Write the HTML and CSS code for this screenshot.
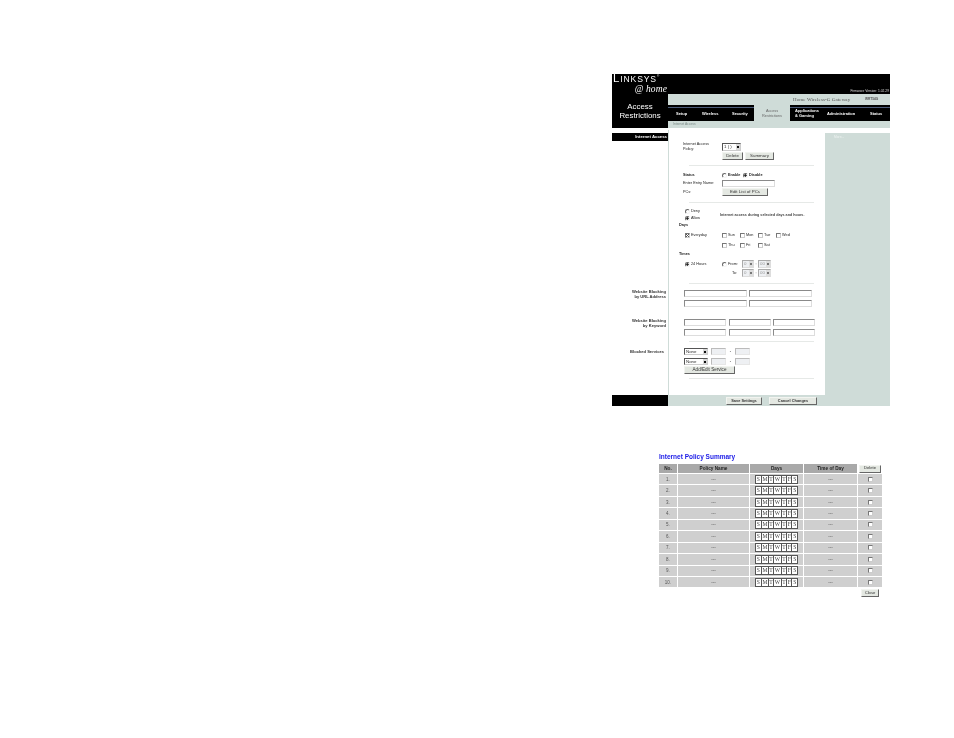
FILE: index.html
```html
<!DOCTYPE html>
<html lang="en">
<head>
<meta charset="utf-8">
<title>Access Restrictions</title>
<link rel="stylesheet" href="styles.css">
</head>
<body>
<div class="frame">
  <header class="top">
    <div class="brand">
      <div class="logo">L<small>INKSYS</small><sup>®</sup></div>
      <div class="logo-home">@ home</div>
      <h1 class="page-title">Access<br>Restrictions</h1>
    </div>
    <div class="head-right">
      <div class="firmware">Firmware Version: 1.02.29</div>
      <div class="product"><span class="product-name">Home Wireless-G Gateway</span><span class="product-model">WRT54G</span></div>
      <nav class="nav">
        <a class="tab t-setup">Setup</a>
        <a class="tab t-wireless">Wireless</a>
        <a class="tab t-security">Security</a>
        <a class="tab active">Access<br>Restrictions</a>
        <a class="tab t-apps">Applications<br>&amp; Gaming</a>
        <a class="tab t-admin">Administration</a>
        <a class="tab t-status">Status</a>
      </nav>
      <div class="subnav">Internet Access</div>
    </div>
  </header>
  <div class="main">
    <div class="content">
      <section class="section s-a">
        <div class="side"><div class="side-bar">Internet Access</div></div>
        <div class="form">
          <div class="row r-policy"><div class="lbl">Internet Access<br>Policy:</div>
            <div class="sel sel-policy"><select><option>1 ( )</option></select></div></div>
          <div class="row r-btns"><div class="lbl"></div><button class="btn b-delete">Delete</button><button class="btn b-summary">Summary</button></div>
          <hr class="rule r1">
          <div class="row r-status"><div class="lbl strong">Status</div>
            <input type="radio" class="radio" name="st"><span class="opt strong o-enable">Enable</span>
            <input type="radio" class="radio" name="st" checked><span class="opt strong">Disable</span></div>
          <div class="row r-entry"><div class="lbl">Enter Entry Name:</div><input class="txt t-entry" type="text"></div>
          <div class="row r-pcs"><div class="lbl">PCs:</div><button class="btn b-edit">Edit List of PCs</button></div>
          <hr class="rule r2">
          <div class="row r-access">
            <div class="deny-allow">
              <div class="mini"><input type="radio" class="radio" name="da"><span class="opt">Deny</span></div>
              <div class="mini"><input type="radio" class="radio" name="da" checked><span class="opt">Allow</span></div>
            </div>
            <span class="access-note">Internet access during selected days and hours.</span>
          </div>
          <div class="heading h-days">Days</div>
          <div class="row r-days">
            <div class="mini m-sched"><input type="checkbox" class="check" checked><span class="opt">Everyday</span></div>
            <div class="day"><input type="checkbox" class="check"><span class="opt">Sun</span></div>
            <div class="day"><input type="checkbox" class="check"><span class="opt">Mon</span></div>
            <div class="day"><input type="checkbox" class="check"><span class="opt">Tue</span></div>
            <div class="day"><input type="checkbox" class="check"><span class="opt">Wed</span></div>
          </div>
          <div class="row r-days2">
            <div class="m-sched"></div>
            <div class="day"><input type="checkbox" class="check"><span class="opt">Thu</span></div>
            <div class="day"><input type="checkbox" class="check"><span class="opt">Fri</span></div>
            <div class="day"><input type="checkbox" class="check"><span class="opt">Sat</span></div>
          </div>
          <div class="heading h-times">Times</div>
          <div class="row r-time">
            <div class="mini m-sched"><input type="radio" class="radio" name="tm" checked><span class="opt">24 Hours</span></div>
            <input type="radio" class="radio" name="tm"><span class="opt o-from">From:</span>
            <div class="sel sel-hr dim"><select disabled><option>0</option></select></div><span class="colon">:</span>
            <div class="sel sel-min dim"><select disabled><option>00</option></select></div>
          </div>
          <div class="row r-time2">
            <div class="m-sched"></div><span class="o-to">To:</span>
            <div class="sel sel-hr dim"><select disabled><option>0</option></select></div><span class="colon">:</span>
            <div class="sel sel-min dim"><select disabled><option>00</option></select></div>
          </div>
          <hr class="rule r3">
        </div>
      </section>
      <section class="section s-b">
        <div class="side"><div class="side-label l-b">Website Blocking<br>by URL Address</div></div>
        <div class="form">
          <div class="inputs two"><input class="txt" type="text"><input class="txt" type="text"><input class="txt" type="text"><input class="txt" type="text"></div>
          <hr class="rule r4">
        </div>
      </section>
      <section class="section s-c">
        <div class="side"><div class="side-label l-c">Website Blocking<br>by Keyword</div></div>
        <div class="form">
          <div class="inputs three"><input class="txt" type="text"><input class="txt" type="text"><input class="txt" type="text"><input class="txt" type="text"><input class="txt" type="text"><input class="txt" type="text"></div>
          <hr class="rule r5">
        </div>
      </section>
      <section class="section s-d">
        <div class="side"><div class="side-label l-d">Blocked Services</div></div>
        <div class="form">
          <div class="svc"><div class="sel sel-svc"><select><option>None</option></select></div><input class="port" type="text" disabled><span class="dash">-</span><input class="port" type="text" disabled></div>
          <div class="svc svc2"><div class="sel sel-svc"><select><option>None</option></select></div><input class="port" type="text" disabled><span class="dash">-</span><input class="port" type="text" disabled></div>
          <button class="btn b-add">Add/Edit Service</button>
          <hr class="rule r6">
        </div>
      </section>
    </div>
    <aside class="help">More...</aside>
  </div>
  <footer class="bottom">
    <div class="bottom-side"></div>
    <div class="bottom-bar"><button class="btn b-save">Save Settings</button><button class="btn b-cancel">Cancel Changes</button></div>
  </footer>
</div>

<div class="summary">
  <h2 class="sum-title">Internet Policy Summary</h2>
  <div class="sum-row sum-head"><div>No.</div><div>Policy Name</div><div>Days</div><div>Time of Day</div><div class="del-cell"><button class="btn b-del">Delete</button></div></div>
  <div class="sum-row"><div class="num">1.</div><div>---</div><div class="days"><span class="d">S</span><span class="d">M</span><span class="d dn">T</span><span class="d dw">W</span><span class="d dn">T</span><span class="d dn">F</span><span class="d">S</span></div><div>---</div><div><input class="check" type="checkbox"></div></div>
  <div class="sum-row"><div class="num">2.</div><div>---</div><div class="days"><span class="d">S</span><span class="d">M</span><span class="d dn">T</span><span class="d dw">W</span><span class="d dn">T</span><span class="d dn">F</span><span class="d">S</span></div><div>---</div><div><input class="check" type="checkbox"></div></div>
  <div class="sum-row"><div class="num">3.</div><div>---</div><div class="days"><span class="d">S</span><span class="d">M</span><span class="d dn">T</span><span class="d dw">W</span><span class="d dn">T</span><span class="d dn">F</span><span class="d">S</span></div><div>---</div><div><input class="check" type="checkbox"></div></div>
  <div class="sum-row"><div class="num">4.</div><div>---</div><div class="days"><span class="d">S</span><span class="d">M</span><span class="d dn">T</span><span class="d dw">W</span><span class="d dn">T</span><span class="d dn">F</span><span class="d">S</span></div><div>---</div><div><input class="check" type="checkbox"></div></div>
  <div class="sum-row"><div class="num">5.</div><div>---</div><div class="days"><span class="d">S</span><span class="d">M</span><span class="d dn">T</span><span class="d dw">W</span><span class="d dn">T</span><span class="d dn">F</span><span class="d">S</span></div><div>---</div><div><input class="check" type="checkbox"></div></div>
  <div class="sum-row"><div class="num">6.</div><div>---</div><div class="days"><span class="d">S</span><span class="d">M</span><span class="d dn">T</span><span class="d dw">W</span><span class="d dn">T</span><span class="d dn">F</span><span class="d">S</span></div><div>---</div><div><input class="check" type="checkbox"></div></div>
  <div class="sum-row"><div class="num">7.</div><div>---</div><div class="days"><span class="d">S</span><span class="d">M</span><span class="d dn">T</span><span class="d dw">W</span><span class="d dn">T</span><span class="d dn">F</span><span class="d">S</span></div><div>---</div><div><input class="check" type="checkbox"></div></div>
  <div class="sum-row"><div class="num">8.</div><div>---</div><div class="days"><span class="d">S</span><span class="d">M</span><span class="d dn">T</span><span class="d dw">W</span><span class="d dn">T</span><span class="d dn">F</span><span class="d">S</span></div><div>---</div><div><input class="check" type="checkbox"></div></div>
  <div class="sum-row"><div class="num">9.</div><div>---</div><div class="days"><span class="d">S</span><span class="d">M</span><span class="d dn">T</span><span class="d dw">W</span><span class="d dn">T</span><span class="d dn">F</span><span class="d">S</span></div><div>---</div><div><input class="check" type="checkbox"></div></div>
  <div class="sum-row"><div class="num">10.</div><div>---</div><div class="days"><span class="d">S</span><span class="d">M</span><span class="d dn">T</span><span class="d dw">W</span><span class="d dn">T</span><span class="d dn">F</span><span class="d">S</span></div><div>---</div><div><input class="check" type="checkbox"></div></div>
  <div class="sum-foot"><button class="btn b-close">Close</button></div>
</div>
</body>
</html>
```
FILE: styles.css
```css
* { box-sizing: border-box; }
html, body { margin: 0; padding: 0; background: #fff; }
body { font-family: "Liberation Sans", Arial, sans-serif; font-size: 3.8px; line-height: 5px; color: #222; overflow: hidden; height: 738px; }

.frame { width: 278px; margin: 74px 0 0 612px; filter: blur(.4px); }

/* header */
.top { display: flex; height: 54px; }
.brand { width: 56px; background: #000; color: #fff; padding-top: 0; text-align: center; }
.logo { font-size: 11.5px; line-height: 9px; height: 10px; text-align: left; padding-left: 1px; letter-spacing: .85px; white-space: nowrap; }
.logo small { font-size: 8.6px; }
.logo sup { font-size: 3px; line-height: 0; }
.logo-home { font-family: "Liberation Serif", serif; font-style: italic; font-size: 9.5px; line-height: 8px; height: 8px; text-align: right; padding-right: 1px; margin-top: 1px; letter-spacing: .1px; white-space: nowrap; }
.page-title { margin: 9px 0 0; font-size: 7.9px; line-height: 9px; font-weight: normal; }
.head-right { width: 222px; display: flex; flex-direction: column; background: #000; }
.firmware { height: 20px; color: #ddd; font-size: 3.3px; text-align: right; padding: 14.5px 1px 0 0; line-height: 5px; }
.product { height: 11px; background: #cfdcd8; display: flex; align-items: center; padding-left: 125px; color: #555; }
.product-name { font-family: "Liberation Serif", serif; font-size: 5px; width: 72px; letter-spacing: .1px; white-space: nowrap; }
.product-model { font-size: 3.2px; font-weight: bold; }
.nav { height: 16px; position: relative; display: flex; align-items: center; background: linear-gradient(#000 2px, #4a5a78 2px, #4a5a78 3px, #000 3px); color: #fff; font-weight: bold; font-size: 4px; line-height: 4.6px; }
.tab { display: block; white-space: nowrap; padding-top: 2px; }
.t-setup { margin-left: 8px; width: 26px; }
.t-wireless { width: 30px; }
.t-security { width: 22px; }
.tab.active { width: 36px; align-self: stretch; background: #cfdcd8; color: #666; font-weight: normal; font-size: 3.8px; text-align: center; padding-top: 4px; margin-right: 5px; }
.t-apps { width: 32px; }
.t-admin { width: 43px; }
.t-status { width: 20px; }
.subnav { height: 7px; background: #cfdcd8; color: #7a8a86; font-size: 3.3px; padding-left: 5px; line-height: 6px; }

/* main */
.main { display: flex; margin-top: 2px; height: 265px; }
.content { width: 213px; display: flex; flex-direction: column; }
.section { display: flex; }
.side { width: 56px; flex: none; }
.form { width: 157px; background: #fff; border-left: 1px solid #cfdcd8; padding-left: 15px; display: flex; flex-direction: column; }
.s-a .form { padding-left: 14px; }
.help { width: 65px; background: #cfdcd8; color: #eef3f1; margin-top: 3px; padding: 2px 0 0 9px; font-size: 3.3px; }
.side-bar { margin-top: 3px; height: 8px; background: #000; color: #fff; text-align: right; font-weight: bold; font-size: 4.3px; line-height: 8px; padding-right: 1px; white-space: nowrap; }
.side-label { text-align: right; font-weight: bold; font-size: 4.1px; padding-right: 2px; color: #333; white-space: nowrap; }
.s-a { height: 154px; }
.s-b { height: 29px; }
.s-c { height: 29px; }
.s-d { height: 53px; }
.l-b { margin-top: 4.5px; }
.l-c { margin-top: 4.5px; }
.l-d { margin-top: 6.5px; padding-right: 4px; }

.row { display: flex; align-items: center; flex: none; }
.lbl { width: 39px; flex: none; white-space: nowrap; }
.strong { font-weight: bold; }
.rule { border: 0; height: 1px; background: #e6e9e7; width: 125px; margin: 0 0 0 6px; flex: none; }
.s-b .rule, .s-c .rule, .s-d .rule { margin-left: 5px; }
.heading { font-weight: bold; margin-left: -4px; height: 6px; line-height: 6px; flex: none; }

.r-policy { height: 10px; margin-top: 12px; }
.r-btns { height: 8px; margin-top: 0; }
.r1 { margin-top: 5px; }
.r-status { height: 6px; margin-top: 6px; }
.o-enable { width: 15px; }
.opt { margin-left: 1px; white-space: nowrap; }
.r-entry { height: 7px; margin-top: 2px; }
.r-pcs { height: 8px; margin-top: 1px; }
.r2 { margin-top: 6px; }
.r-access { height: 14px; margin-top: 5px; margin-left: 2px; }
.deny-allow { width: 35px; flex: none; display: flex; flex-direction: column; }
.mini { display: flex; align-items: center; height: 7px; }
.access-note { font-weight: bold; color: #444; white-space: nowrap; font-size: 3.7px; }
.h-days { margin-top: 0; }
.r-days { height: 6px; margin-top: 4px; margin-left: 2px; }
.r-days2 { height: 6px; margin-top: 4px; margin-left: 2px; }
.m-sched { width: 37px; flex: none; }
.day { width: 18px; flex: none; display: flex; align-items: center; }
.h-times { margin-top: 3px; }
.r-time { height: 8px; margin-top: 3px; margin-left: 2px; }
.r-time2 { height: 8px; margin-top: 1px; margin-left: 2px; }
.o-from { width: 14px; }
.o-to { width: 20px; text-align: right; padding-right: 5px; }
.colon { width: 4px; text-align: center; }
.r3 { margin-top: 6px; }

/* form controls */
.radio, .check { appearance: none; -webkit-appearance: none; margin: 0; padding: 0; flex: none; background: #fff; border: 1px solid #999; width: 5px; height: 5px; }
.radio { border-radius: 50%; border-color: #666 #f4f4f4 #f4f4f4 #666; }
.radio:checked { background: radial-gradient(closest-side, #222 0 60%, #fff 100%); }
.check { border-color: #777 #ccc #ccc #777; }
.check:checked { background: linear-gradient(45deg, transparent 42%, #555 42% 58%, transparent 58%), linear-gradient(-45deg, transparent 42%, #555 42% 58%, transparent 58%), #fff; }
.txt, .port { margin: 0; padding: 0; background: #fff; border: 1px solid; border-color: #8a8a8a #ddd #ddd #8a8a8a; height: 7px; flex: none; min-width: 0; }
.t-entry { width: 53px; }
.port { width: 15px; background: #eef0f3; border-color: #bbb #e6e6e6 #e6e6e6 #bbb; }
.btn { margin: 0; padding: 0; font-family: "Liberation Sans", Arial, sans-serif; font-size: 4.4px; line-height: 1; color: #333; background: #e4e8e2; border: 1px solid; border-color: #f2f4f0 #666 #666 #f2f4f0; flex: none; white-space: nowrap; }
.b-delete { width: 21px; height: 8px; margin-right: 2px; }
.b-summary { width: 29px; height: 8px; }
.b-edit { width: 46px; height: 8px; }
.b-add { width: 51px; height: 8px; margin-top: 1px; font-size: 4.6px; }
.sel { display: inline-flex; align-items: stretch; flex: none; background: #fff; border: 1px solid; border-color: #555 #ccc #ccc #555; height: 8px; overflow: hidden; }
.sel select { appearance: none; -webkit-appearance: none; flex: 1; min-width: 0; border: 0; background: transparent; padding: 0 0 0 1px; margin: 0; font-family: "Liberation Sans", Arial, sans-serif; font-size: 4.4px; line-height: 6px; color: #333; opacity: 1; }
.sel::after { content: ""; width: 4px; flex: none; background: linear-gradient(#111, #111) center / 2px 2px no-repeat, #d8d8d8; }
.sel-policy { width: 19px; }
.sel-hr { width: 12px; }
.sel-min { width: 13px; }
.sel-svc { width: 24px; height: 7px; }
.dim { background: #eef0f3; border-color: #aaa #ddd #ddd #aaa; }
.dim select { color: #999; }
.dim::after { background: linear-gradient(#777, #777) center / 2px 2px no-repeat, #ddd; }

.inputs { display: grid; gap: 3px 2px; margin-top: 6px; flex: none; }
.inputs .txt { width: 100%; }
.two { grid-template-columns: 63px 63px; }
.three { grid-template-columns: 42px 42px 42px; column-gap: 2.5px; }
.r4 { margin-top: 6px; }
.r5 { margin-top: 5px; }
.svc { display: flex; align-items: center; height: 7px; margin-top: 6px; flex: none; }
.svc .port { margin-left: 3px; }
.svc .port + .dash + .port { margin-left: 0; }
.dash { width: 9px; text-align: center; }
.svc2 { margin-top: 3px; }
.r6 { margin-top: 4px; }
.s-d .btn { align-self: flex-start; }

/* bottom */
.bottom { display: flex; height: 11px; }
.bottom-side { width: 56px; background: #000; }
.bottom-bar { flex: 1; background: #cfdcd8; display: flex; align-items: center; padding-left: 58px; }
.b-save { width: 36px; height: 8px; margin-right: 7px; font-weight: bold; font-size: 3.9px; }
.b-cancel { width: 48px; height: 8px; font-weight: bold; font-size: 3.9px; }

/* summary */
.summary { margin: 47px 0 0 659px; width: 223px; filter: blur(.35px); }
.sum-title { margin: 0 0 3px; font-size: 6.5px; line-height: 8px; color: #1a1ae6; font-weight: bold; white-space: nowrap; }
.sum-row { display: grid; grid-template-columns: 18px 71px 53px 53px 24px; column-gap: 1px; height: 10.44px; margin-bottom: 1px; font-size: 4.5px; color: #555; }
.sum-row > div { background: #cfcfcf; display: flex; align-items: center; justify-content: center; }
.sum-head { height: 9px; font-weight: bold; color: #222; font-size: 4.7px; }
.sum-head > div { background: #a9a9a9; }
.sum-head > .del-cell { background: #fff; }
.d { display: block; height: 9px; width: 6.6px; background: #fff; border: .7px solid #555; border-right: 0; font-family: "Liberation Serif", serif; font-size: 5.6px; line-height: 7.6px; text-align: center; color: #444; }
.d:last-child { border-right: .7px solid #555; width: 7px; }
.dn { width: 5.3px; }
.dw { width: 7.7px; }
.b-del { width: 22px; height: 8px; font-size: 4.2px; }
.sum-foot { display: flex; justify-content: flex-end; padding: 1px 3px 0 0; }
.b-close { width: 18px; height: 8px; font-size: 4.2px; }
```
